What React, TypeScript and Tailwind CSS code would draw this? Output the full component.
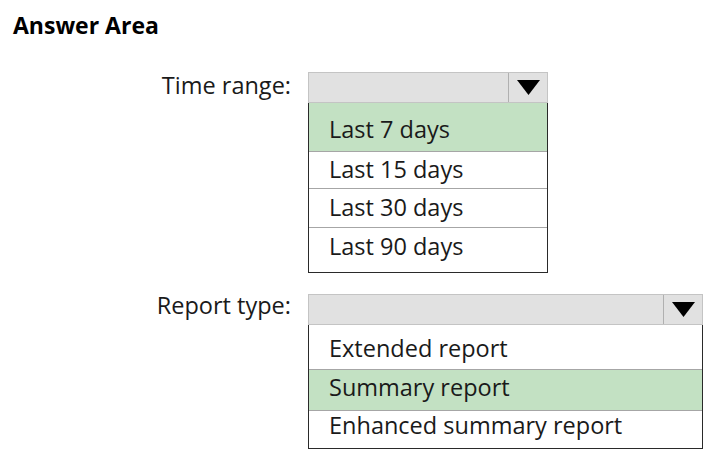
const font = { fontFamily: '"Open Sans", "Noto Sans", Arial, sans-serif' };

function Arrow() {
  return (
    <svg width="23" height="15" viewBox="0 0 23 15">
      <polygon points="0,0 23,0 11.5,15" fill="#000" />
    </svg>
  );
}

interface Option {
  label: string;
  selected?: boolean;
  rowClass: string;
}

function Dropdown({ width, options }: { width: string; options: Option[] }) {
  return (
    <div className={`flex flex-col ${width}`}>
      <div className="flex h-[31px] border border-[#c4c4c4] bg-[#e1e1e1]">
        <div className="flex-1" />
        <div className="flex w-[39px] items-center justify-center border-l border-[#b0b0b0]">
          <Arrow />
        </div>
      </div>
      <div className="flex flex-col border border-t-0 border-[#2a2a2a]">
        {options.map((o, i) => (
          <div
            key={o.label}
            className={`flex items-center pl-[20px] text-[23.5px] leading-[30px] text-[#1a1a1a] ${o.rowClass} ${
              o.selected ? 'bg-[#c3e1c3]' : 'bg-white'
            } ${i < options.length - 1 ? 'border-b border-[#a6a6a6]' : ''}`}
          >
            {o.label}
          </div>
        ))}
      </div>
    </div>
  );
}

export default function App() {
  return (
    <div className="h-[453px] w-[727px] bg-white" style={font}>
      <div className="pl-[13px] pt-[10px] text-[23px] font-bold leading-[30px] text-black">Answer Area</div>

      <div className="mt-[32px] flex">
        <div className="-mt-[2px] w-[291px] text-right text-[23.5px] leading-[30px] text-[#1a1a1a]">Time range:</div>
        <div className="ml-[17px]">
          <Dropdown
            width="w-[240px]"
            options={[
              { label: 'Last 7 days', selected: true, rowClass: 'h-[49px] pt-[4px]' },
              { label: 'Last 15 days', rowClass: 'h-[37px] pb-[3px]' },
              { label: 'Last 30 days', rowClass: 'h-[39px] pb-[2px]' },
              { label: 'Last 90 days', rowClass: 'h-[44px] pb-[8px]' },
            ]}
          />
        </div>
      </div>

      <div className="mt-[21px] flex">
        <div className="-mt-[4px] w-[291px] text-right text-[23.5px] leading-[30px] text-[#1a1a1a]">Report type:</div>
        <div className="ml-[17px]">
          <Dropdown
            width="w-[395px]"
            options={[
              { label: 'Extended report', rowClass: 'h-[45px] pt-[1px]' },
              { label: 'Summary report', selected: true, rowClass: 'h-[41px] pb-[6px]' },
              { label: 'Enhanced summary report', rowClass: 'h-[37px] pb-[10px]' },
            ]}
          />
        </div>
      </div>
    </div>
  );
}
